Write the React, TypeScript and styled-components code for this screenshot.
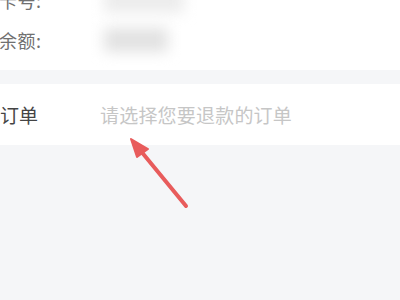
import styled, { createGlobalStyle } from 'styled-components';

const GlobalStyle = createGlobalStyle`
  html, body {
    margin: 0;
    padding: 0;
    background: #f5f6f8;
    overflow: hidden;
  }
  body {
    font-family: "Noto Sans CJK SC", "Noto Sans", sans-serif;
  }
`;

export default function App() {
    return (
        <Screen>
            <GlobalStyle />
            <Page>
                <InfoCard>
                    <InfoRow>
                        <InfoLabel>银行卡号:</InfoLabel>
                        <Masked w={80} h={26} shade="#ececec" />
                    </InfoRow>
                    <InfoRow>
                        <InfoLabel>账户余额:</InfoLabel>
                        <Masked w={64} h={24} shade="#e2e2e2" />
                    </InfoRow>
                </InfoCard>
                <Gap />
                <SelectRow>
                    <SelectLabel>退款订单</SelectLabel>
                    <Placeholder>请选择您要退款的订单</Placeholder>
                </SelectRow>
            </Page>
            <Pointer viewBox="0 0 400 300" width="400" height="300">
                <line x1="186" y1="206" x2="140" y2="150" stroke="#e85c5c" strokeWidth="4" strokeLinecap="round" />
                <polygon points="131,139 148,149 137,157" fill="#e85c5c" stroke="#e85c5c" strokeWidth="2" strokeLinejoin="round" />
            </Pointer>
        </Screen>
    );
}

const Screen = styled.div`
    position: relative;
    width: 400px;
    height: 300px;
    overflow: hidden;
    background: #f5f6f8;
`;

const Page = styled.div`
    width: 438px;
    margin-left: -38px;
    margin-top: -20px;
`;

const InfoCard = styled.div`
    background: #fff;
    padding-bottom: 10px;
`;

const InfoRow = styled.div`
    display: flex;
    align-items: center;
    height: 40px;
`;

const InfoLabel = styled.div`
    width: 142px;
    font-size: 18px;
    letter-spacing: 0.5px;
    color: #707070;
`;

const Masked = styled.div<{ w: number; h: number; shade: string }>`
    width: ${p => p.w}px;
    height: ${p => p.h}px;
    background: ${p => p.shade};
    filter: blur(7px);
`;

const Gap = styled.div`
    height: 14px;
`;

const SelectRow = styled.div`
    display: flex;
    align-items: center;
    height: 61px;
    background: #fff;
`;

const SelectLabel = styled.div`
    width: 138px;
    font-size: 19px;
    color: #444;
`;

const Placeholder = styled.div`
    font-size: 19px;
    letter-spacing: 0.2px;
    color: #c6c6c6;
`;

const Pointer = styled.svg`
    position: absolute;
    left: 0;
    top: 0;
    pointer-events: none;
`;
